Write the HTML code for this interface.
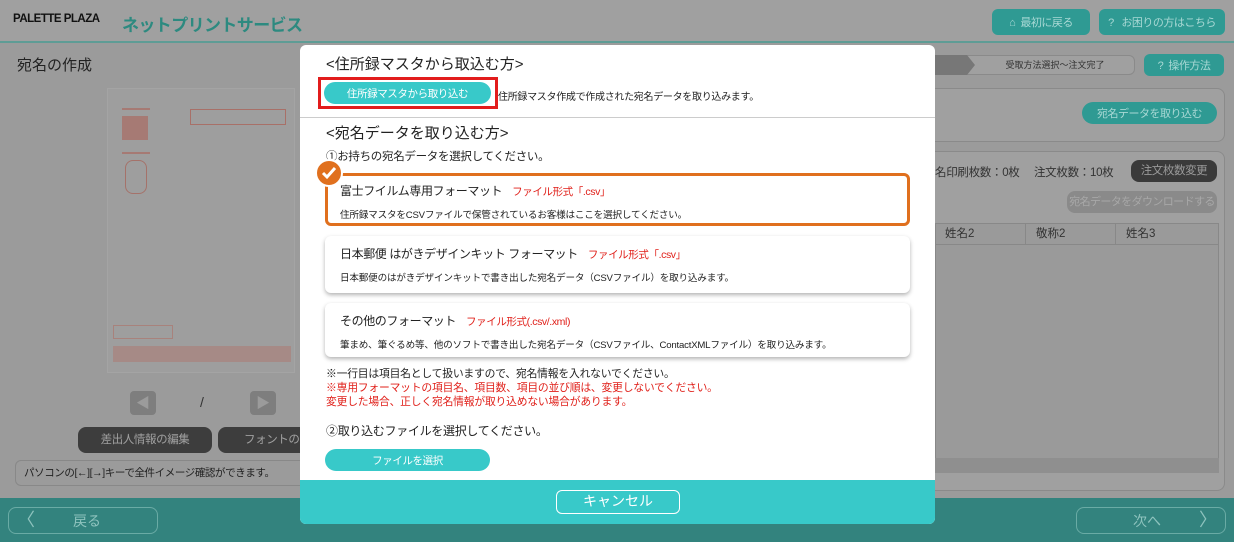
<!DOCTYPE html>
<html><head><meta charset="utf-8"><style>
*{box-sizing:border-box;margin:0;padding:0}
body{width:1234px;height:542px;overflow:hidden;background:#9b9b9b;font-family:"Liberation Sans","Noto Sans CJK JP",sans-serif;position:relative;color:#222}
.a{position:absolute;white-space:nowrap}
.tb{background:#2f9a93;color:#a8d8d4;border-radius:6px;font-size:11px;display:flex;align-items:center;justify-content:center;letter-spacing:-.5px}
.modal{left:300px;top:45px;width:635px;height:479px;background:#fff;border-radius:6px;overflow:hidden}
.card{position:absolute;left:25px;width:585px;border-radius:6px;background:#fff;box-shadow:0 2px 4px rgba(0,0,0,.3);padding:9px 0 0 15px}
.card .t{font-size:12px;color:#222;letter-spacing:-.4px}
.card .t span{color:#e0201a;font-size:10.5px;margin-left:10px}
.card .d{font-size:9.6px;color:#222;margin-top:8px;letter-spacing:-.2px}
.btn{background:#38c9c9;color:#fff;border-radius:8px;font-size:10.5px;display:flex;align-items:center;justify-content:center;letter-spacing:-.4px}
</style></head><body>
<div class="a" style="left:0;top:0;width:1234px;height:43px;background:#a0a0a0;border-bottom:2px solid #5e9c95"></div>
<div class="a" style="left:13px;top:13px;font-size:11.5px;font-weight:bold;color:#111;letter-spacing:-.5px">PALETTE PLAZA</div>
<div class="a" style="left:122px;top:11px;font-size:17px;font-weight:bold;color:#2d8a80;letter-spacing:-.6px">ネットプリントサービス</div>
<div class="a tb" style="left:992px;top:9px;width:98px;height:26px">⌂&nbsp; 最初に戻る</div>
<div class="a tb" style="left:1099px;top:9px;width:126px;height:26px">?&nbsp;&nbsp; お困りの方はこちら</div>
<div class="a" style="left:17px;top:54px;font-size:15px;color:#222">宛名の作成</div>
<div class="a" style="left:935px;top:55px;width:200px;height:20px;border:1px solid #8a8a8a;border-radius:0 6px 6px 0;background:#a0a0a0;font-size:9px;color:#333;text-align:center;line-height:18px;padding-left:40px">受取方法選択～注文完了</div>
<div class="a" style="left:935px;top:55px;width:40px;height:20px;background:#777;clip-path:polygon(0 0,80% 0,100% 50%,80% 100%,0 100%)"></div>
<div class="a tb" style="left:1144px;top:54px;width:80px;height:22px">?&nbsp; 操作方法</div>
<div class="a" style="left:925px;top:88px;width:300px;height:54px;border:1px solid #8a8a8a;border-radius:8px;background:#a0a0a0"></div>
<div class="a tb" style="left:1082px;top:102px;width:135px;height:22px;border-radius:11px">宛名データを取り込む</div>
<div class="a" style="left:925px;top:151px;width:300px;height:340px;border:1px solid #8a8a8a;border-radius:8px;background:#a0a0a0"></div>
<div class="a" style="left:935px;top:164px;font-size:11.5px;color:#333;letter-spacing:-.3px">名印刷枚数：0枚&nbsp;&nbsp;&nbsp;&nbsp;&nbsp;注文枚数：10枚</div>
<div class="a" style="left:1131px;top:160px;width:86px;height:22px;background:#3a3a3a;border-radius:8px;color:#999;font-size:11.5px;text-align:center;line-height:22px;letter-spacing:-.4px">注文枚数変更</div>
<div class="a" style="left:1067px;top:191px;width:150px;height:22px;background:#8a8a8a;border-radius:8px;color:#a8a8a8;font-size:11px;text-align:center;line-height:22px;letter-spacing:-.6px">宛名データをダウンロードする</div>
<div class="a" style="left:935px;top:223px;width:284px;height:250px;background:#9a9a9a;border:1px solid #888"></div>
<div class="a" style="left:935px;top:223px;width:284px;height:22px;border-bottom:1px solid #888;font-size:11.5px;color:#333;line-height:22px">
<span class="a" style="left:10px">姓名2</span><span class="a" style="left:90px;border-left:1px solid #888;padding-left:10px">敬称2</span><span class="a" style="left:180px;border-left:1px solid #888;padding-left:10px">姓名3</span></div>
<div class="a" style="left:935px;top:458px;width:284px;height:15px;background:#8f8f8f"></div>
<div class="a" style="left:107px;top:88px;width:188px;height:285px;background:#9e9e9e;border:1px solid #a4a4a4"></div>
<div class="a" style="left:190px;top:109px;width:96px;height:16px;border:1px solid #a87068"></div>
<div class="a" style="left:122px;top:116px;width:26px;height:24px;background:#a67a74"></div>
<div class="a" style="left:122px;top:108px;width:28px;height:2px;background:#a67a74"></div>
<div class="a" style="left:122px;top:152px;width:28px;height:2px;background:#a67a74"></div>
<div class="a" style="left:125px;top:160px;width:22px;height:34px;border:1px solid #a5726a;border-radius:8px"></div>
<div class="a" style="left:113px;top:325px;width:60px;height:14px;border:1px solid #a8827c"></div>
<div class="a" style="left:113px;top:346px;width:178px;height:16px;background:#a68a86"></div>
<div class="a" style="left:130px;top:391px;width:26px;height:24px;background:#7e7e7e;border-radius:4px;color:#9b9b9b;font-size:14px;text-align:center;line-height:24px">◀</div>
<div class="a" style="left:200px;top:394px;font-size:14px;color:#333">/</div>
<div class="a" style="left:250px;top:391px;width:26px;height:24px;background:#7e7e7e;border-radius:4px;color:#9b9b9b;font-size:14px;text-align:center;line-height:24px">▶</div>
<div class="a" style="left:78px;top:427px;width:134px;height:26px;background:#3d3d3d;border-radius:8px;color:#a0a0a0;font-size:11.5px;text-align:center;line-height:26px;letter-spacing:-.4px">差出人情報の編集</div>
<div class="a" style="left:218px;top:427px;width:100px;height:26px;background:#3d3d3d;border-radius:8px;color:#a0a0a0;font-size:11.5px;padding-left:26px;line-height:26px;letter-spacing:-.4px">フォントの選択</div>
<div class="a" style="left:15px;top:460px;width:300px;height:26px;border:1px solid #888;border-radius:6px;font-size:10.5px;color:#222;line-height:24px;padding-left:8px;letter-spacing:-.4px">パソコンの[←][→]キーで全件イメージ確認ができます。</div>
<div class="a" style="left:0;top:498px;width:1234px;height:44px;background:#33837e"></div>
<div class="a" style="left:8px;top:507px;width:150px;height:27px;border:1px solid #6aaba5;border-radius:8px;color:#8ec3be;font-size:14px;line-height:25px"><span style="margin-left:8px;font-size:18px">〈</span><span style="margin-left:38px">戻る</span></div>
<div class="a" style="left:1076px;top:507px;width:150px;height:27px;border:1px solid #6aaba5;border-radius:8px;color:#8ec3be;font-size:14px;line-height:25px"><span style="margin-left:56px">次へ</span><span style="margin-left:38px;font-size:18px">〉</span></div>
<div class="a modal">
<div class="a" style="left:26px;top:8px;font-size:15px;color:#222">&lt;住所録マスタから取込む方&gt;</div>
<div class="a" style="left:18px;top:32px;width:180px;height:32px;border:3px solid #e21c1c"></div>
<div class="a btn" style="left:24px;top:37px;width:167px;height:22px;border-radius:11px">住所録マスタから取り込む</div>
<div class="a" style="left:198px;top:43px;font-size:10px;color:#222;letter-spacing:-.3px">住所録マスタ作成で作成された宛名データを取り込みます。</div>
<div class="a" style="left:0;top:72px;width:635px;height:1px;background:#ccc"></div>
<div class="a" style="left:26px;top:77px;font-size:15px;color:#222">&lt;宛名データを取り込む方&gt;</div>
<div class="a" style="left:26px;top:103px;font-size:11.5px;color:#222;letter-spacing:-.3px">①お持ちの宛名データを選択してください。</div>
<div class="card" style="top:128px;height:53px;border:3px solid #e0701e;padding:6px 0 0 12px;box-shadow:none"><div class="t">富士フイルム専用フォーマット<span>ファイル形式「.csv」</span></div><div class="d">住所録マスタをCSVファイルで保管されているお客様はここを選択してください。</div></div>
<div class="a" style="left:15px;top:114px;width:28px;height:28px;border-radius:50%;background:#e0701e;border:2px solid #fff"></div>
<svg class="a" style="left:21px;top:121px" width="16" height="14"><path d="M2 7 L6 11 L14 2" stroke="#fff" stroke-width="3" fill="none"/></svg>
<div class="card" style="top:191px;height:57px"><div class="t">日本郵便 はがきデザインキット フォーマット<span>ファイル形式「.csv」</span></div><div class="d">日本郵便のはがきデザインキットで書き出した宛名データ（CSVファイル）を取り込みます。</div></div>
<div class="card" style="top:258px;height:54px"><div class="t">その他のフォーマット<span>ファイル形式(.csv/.xml)</span></div><div class="d">筆まめ、筆ぐるめ等、他のソフトで書き出した宛名データ（CSVファイル、ContactXMLファイル）を取り込みます。</div></div>
<div class="a" style="left:26px;top:322px;font-size:10.8px;color:#222;line-height:14px;letter-spacing:-.2px">※一行目は項目名として扱いますので、宛名情報を入れないでください。<br><span style="color:#e0201a">※専用フォーマットの項目名、項目数、項目の並び順は、変更しないでください。<br>変更した場合、正しく宛名情報が取り込めない場合があります。</span></div>
<div class="a" style="left:26px;top:377px;font-size:12px;color:#222;letter-spacing:-.3px">②取り込むファイルを選択してください。</div>
<div class="a btn" style="left:25px;top:404px;width:165px;height:22px;border-radius:11px">ファイルを選択</div>
<div class="a" style="left:0;top:435px;width:635px;height:44px;background:#38c9c9"></div>
<div class="a" style="left:256px;top:445px;width:124px;height:24px;border:1.5px solid #fff;border-radius:6px;color:#fff;font-size:14px;text-align:center;line-height:21px">キャンセル</div>
</div>
</body></html>
